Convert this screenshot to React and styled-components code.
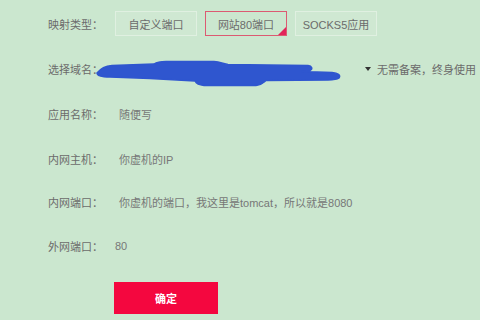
import React from "react";
import styled, { createGlobalStyle } from "styled-components";

const GlobalStyle = createGlobalStyle`
  html, body {
    margin: 0;
    padding: 0;
    background: #cbe7cf;
  }
  body {
    font-family: "Liberation Sans", "Noto Sans CJK SC", sans-serif;
  }
`;

const Page = styled.div`
  width: 480px;
  height: 320px;
  overflow: hidden;
  box-sizing: border-box;
  padding: 11px 0 0 48px;
  background: #cbe7cf;
  display: flex;
  flex-direction: column;
  gap: 20px;
`;

const Row = styled.div`
  display: flex;
  align-items: center;
  height: 25px;
  margin-top: ${(p) => p.$shift || 0}px;
`;

const Label = styled.span`
  width: 67px;
  flex: none;
  font-size: 11px;
  color: #6b6b6b;
  white-space: nowrap;
`;

const Value = styled.span`
  font-size: 11px;
  color: #777;
  white-space: nowrap;
  margin-left: ${(p) => p.$indent ?? 4}px;
`;

const Tabs = styled.div`
  display: flex;
  gap: 8px;
`;

const Tab = styled.div`
  position: relative;
  width: 82px;
  height: 25px;
  box-sizing: border-box;
  display: flex;
  align-items: center;
  justify-content: center;
  font-size: 11px;
  color: #6b6b6b;
  background: ${(p) => (p.$active ? "transparent" : "rgba(255,255,255,0.08)")};
  border: 1px solid ${(p) => (p.$active ? "#dc5a72" : "rgba(255,255,255,0.35)")};
`;

const Corner = styled.span`
  position: absolute;
  right: 0;
  bottom: 0;
  width: 0;
  height: 0;
  border-left: 8px solid transparent;
  border-bottom: 8px solid #e2245a;
`;

const Domain = styled.div`
  display: flex;
  align-items: center;
  margin-left: -19px;

  svg {
    overflow: visible;
    flex: none;
  }
`;

const Caret = styled.span`
  margin-left: 23px;
  width: 0;
  height: 0;
  border-left: 3px solid transparent;
  border-right: 3px solid transparent;
  border-top: 4px solid #333;
`;

const Hint = styled.span`
  margin-left: 6px;
  font-size: 11px;
  color: #6b6b6b;
  white-space: nowrap;
`;

const Submit = styled.button`
  margin: 4px 0 0 66px;
  width: 104px;
  height: 32px;
  flex: none;
  border: none;
  background: #f4073f;
  color: #fff;
  font-family: "Liberation Sans", "Noto Sans CJK SC", sans-serif;
  font-size: 11px;
  font-weight: bold;
  cursor: pointer;
`;

// hand-drawn blue scribble hiding the domain name
const Scribble = () => (
  <svg width="246" height="26" viewBox="0 0 246 26">
    <path
      d="M1 17 C5 12, 10 10, 16 9.5 L58 8 C61 6, 64 5.5, 70 5.5 L118 5.5 C124 6, 128 8, 132 8.5 L212 9.5 C216 10, 217 13, 214 14.5 L206 15.5 L236 16.5 C242 17, 245 19, 243 22 C241 23.5, 238 24, 232 24 L170 24.5 C167 27, 166 29, 160 29.5 L108 29.5 C102 29, 100 27, 99 25 L54 22.5 L14 21 C6 21, 1 20, 1 17 Z"
      fill="#2f56cf"
      stroke="#2f56cf"
      strokeWidth="1.5"
      strokeLinejoin="round"
    />
  </svg>
);

const types = ["自定义端口", "网站80端口", "SOCKS5应用"];

export default function App() {
  return (
    <>
      <GlobalStyle />
      <Page>
        <Row>
          <Label>映射类型：</Label>
          <Tabs>
            {types.map((t, i) => (
              <Tab key={t} $active={i === 1}>
                {t}
                {i === 1 && <Corner />}
              </Tab>
            ))}
          </Tabs>
        </Row>
        <Row>
          <Label>选择域名：</Label>
          <Domain>
            <Scribble />
            <Caret />
            <Hint>无需备案，终身使用</Hint>
          </Domain>
        </Row>
        <Row>
          <Label>应用名称：</Label>
          <Value>随便写</Value>
        </Row>
        <Row>
          <Label>内网主机：</Label>
          <Value>你虚机的IP</Value>
        </Row>
        <Row $shift={-2}>
          <Label>内网端口：</Label>
          <Value>你虚机的端口，我这里是tomcat，所以就是8080</Value>
        </Row>
        <Row $shift={-1}>
          <Label>外网端口：</Label>
          <Value $indent={0}>80</Value>
        </Row>
        <Submit>确定</Submit>
      </Page>
    </>
  );
}
